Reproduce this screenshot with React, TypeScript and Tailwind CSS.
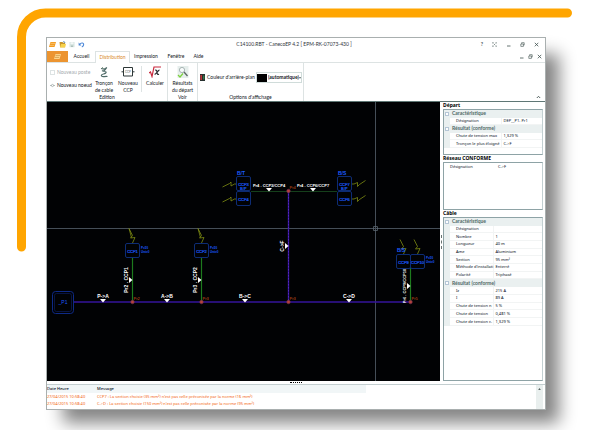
import React from "react";

type Row = { label: string; value?: string; header?: boolean };

const DEPART: Row[] = [
  { label: "Caractéristique", header: true },
  { label: "Désignation", value: "DEP__P1. Pr1" },
  { label: "Résultat (conforme)", header: true },
  { label: "Chute de tension max", value: "1,329 %" },
  { label: "Tronçon le plus éloigné", value: "C->F" },
];

const CABLE: Row[] = [
  { label: "Caractéristique", header: true },
  { label: "Désignation", value: "" },
  { label: "Nombre", value: "1" },
  { label: "Longueur", value: "40 m" },
  { label: "Ame", value: "Aluminium" },
  { label: "Section", value: "95 mm²" },
  { label: "Méthode d'installati", value: "Enterré" },
  { label: "Polarité", value: "Triphasé" },
  { label: "Résultat (conforme)", header: true },
  { label: "Iz", value: "215 A" },
  { label: "I", value: "89 A" },
  { label: "Chute de tension n", value: "5 %" },
  { label: "Chute de tension", value: "0,481 %" },
  { label: "Chute de tension c.", value: "1,329 %" },
];

const MESSAGES = [
  {
    date: "27/04/2015 10:58:40",
    text: "CCP7 : La section choisie (35 mm²) n'est pas celle préconisée par la norme (16 mm²)",
  },
  {
    date: "27/04/2015 10:58:40",
    text: "C->D : La section choisie (150 mm²) n'est pas celle préconisée par la norme (95 mm²)",
  },
];

const FolderIcon = ({ light = false }: { light?: boolean }) => (
  <svg viewBox="0 0 7 7" className="w-[7px] h-[7px]">
    <path d="M1.500 1H7L5.500 6H0z" fill={light ? "#ffd58a" : "#f39a1e"} />
    <path d="M1.500 2.400h4.500M.8 4.400h4.400" stroke={light ? "#b98532" : "#fbd79b"} strokeWidth=".6" />
  </svg>
);

const QuickAccess = () => (
  <div className="flex items-center gap-[3px] flex-1">
    <button aria-label="Caneco">
      <FolderIcon />
    </button>
    <button aria-label="Ouvrir">
      <svg viewBox="0 0 7 7" className="w-[7px] h-[7px]">
        <path d="M.5 1h3l.6.8h2v4.400h-5z" fill="#c9952b" />
        <path d="M2 3h5l-1 3.400h-5z" fill="#f7d24b" />
        <path d="M4 .6l2 .6-.6 1" stroke="#3d78a8" strokeWidth=".7" fill="none" />
      </svg>
    </button>
    <button aria-label="Enregistrer">
      <svg viewBox="0 0 6 7" className="w-1.5 h-[7px]">
        <path d="M.5 1h5v5.200h-5z" fill="#d5e3df" />
        <path d="M1.500 1.200h3v2h-3z" fill="#f4f8f7" />
        <path d="M2 4.500h2v1.600h-2z" fill="#aebfba" />
      </svg>
    </button>
    <button aria-label="Annuler">
      <svg viewBox="0 0 7 7" className="w-[7px] h-[7px]" fill="none">
        <path d="M1.500 3.500C3 1.200 6 1.600 5.600 3.800c-.2 1.300-1 1.900-1.800 2.200" stroke="#4a86d8" strokeWidth="1.100" />
        <path d="M.6 1.600v3h2.800z" fill="#4a86d8" />
      </svg>
    </button>
  </div>
);

const MinIcon = () => (
  <svg viewBox="0 0 5 5" className="size-[5px]">
    <path d="M1 4h3.500" stroke="#40504e" strokeWidth=".8" />
  </svg>
);

const RestoreIcon = () => (
  <svg viewBox="0 0 5 5" className="size-[5px]" fill="none" stroke="#40504e" strokeWidth=".6">
    <path d="M.8 2h2.600v2.400H.8zM1.600 1.800V.7h2.600v2.400h-.6" />
  </svg>
);

const CloseIcon = () => (
  <svg viewBox="0 0 5 5" className="size-[5px]">
    <path d="M.8.8l3.500 3.500M4.300.8L.8 4.300" stroke="#40504e" strokeWidth=".8" />
  </svg>
);

const TitleBar = () => (
  <div className="flex items-center h-[13px] px-0.5">
    <QuickAccess />
    <h1 className="text-[5px] leading-none text-[#2f353c] whitespace-nowrap">
      C14100.RBT - CanecoEP 4.2 [ EPM-RK-07073-430 ]
    </h1>
    <div className="flex flex-1 items-center justify-end gap-[9px] pr-1">
      <button aria-label="Aide" className="text-[5px] leading-none font-bold text-[#40504e]">
        ?
      </button>
      <button aria-label="Plein écran">
        <svg viewBox="0 0 5 5" className="size-[5px]" fill="none" stroke="#6d7c7a" strokeWidth=".6">
          <path d="M.5 1.500V.5h1.200M3.500.5h1v1M4.500 3.500v1h-1M1.700 4.500H.5v-1M1.500 1.500l2 2M3.500 1.500l-2 2" />
        </svg>
      </button>
      <button aria-label="Réduire">
        <MinIcon />
      </button>
      <button aria-label="Restaurer">
        <RestoreIcon />
      </button>
      <button aria-label="Fermer">
        <CloseIcon />
      </button>
    </div>
  </div>
);

const TabBar = () => (
  <nav className="flex items-stretch h-3 border-b border-[#dde3e3] text-[5px] leading-none text-[#11161c]">
    <button aria-label="Fichier" className="w-[21px] h-[11px] bg-[#ec9430] flex items-center justify-center">
      <FolderIcon light />
    </button>
    <button className="w-[27px]">Accueil</button>
    <button className="w-[35px] h-3 border border-b-0 border-[#dde3e3] bg-white text-[#d98a2c]">
      Distribution
    </button>
    <button className="w-8">Impression</button>
    <button className="w-7">Fenêtre</button>
    <button className="w-[17px]">Aide</button>
    <div className="flex flex-1 items-center justify-end gap-1 pr-[3px]">
      <button aria-label="Réduire le document">
        <MinIcon />
      </button>
      <button aria-label="Restaurer le document">
        <RestoreIcon />
      </button>
      <button aria-label="Fermer le document">
        <CloseIcon />
      </button>
    </div>
  </nav>
);

const BigButton = ({ lines, children }: { lines: string[]; children: React.ReactNode }) => (
  <button className="flex flex-col items-center gap-0.5 w-6 text-center leading-[7px] whitespace-nowrap">
    {children}
    <span>
      {lines.map((line) => (
        <span key={line} className="block">
          {line}
        </span>
      ))}
    </span>
  </button>
);

const Ribbon = () => (
  <div className="flex items-stretch h-[39px] border-b border-[#5f7775] text-[5px] leading-none text-[#11161c]">
    {/* Edition */}
    <section className="flex flex-col justify-between w-[121px] border-r border-[#dde3e3] pt-[3px] pb-px">
      <div className="flex">
        <div className="flex flex-col items-start gap-2 w-[45px] pl-[3px] pt-1 whitespace-nowrap">
          <button className="flex items-center gap-0.5 text-[#a3a9ad]">
            <span className="w-[5px] h-[5px] border border-[#dde3e3]" />
            Nouveau poste
          </button>
          <button className="flex items-center gap-0.5">
            <svg viewBox="0 0 5 5" className="size-[5px]" fill="none" stroke="#8b9795" strokeWidth=".6">
              <path d="M0 2.500h1.500M3.500 2.500H5" />
              <circle cx="2.500" cy="2.500" r="1.100" />
            </svg>
            Nouveau noeud
          </button>
        </div>
        <BigButton lines={["Tronçon", "de cable"]}>
          <svg viewBox="0 0 10 12" className="w-2.5 h-3" fill="none">
            <path d="M2 2.500l3 .7 3-1.700M7.500 2L5.500 4.500l-2.500.3 4 1.200c.6 1-1 1.700-2.500 2s-2.800 1.200-1.800 2.200 3 0 5.800.3" stroke="#4f6b68" strokeWidth="1.200" />
            <path d="M3 1l1.500 1.500" stroke="#6e8b72" strokeWidth=".8" />
          </svg>
        </BigButton>
        <BigButton lines={["Nouveau", "CCP"]}>
          <svg viewBox="0 0 14 12" className="w-3.5 h-3">
            <path d="M2.500 1.500h9v8.500h-9zM0.500 5.800h2M11.500 5.800h2" fill="none" stroke="#2e3838" strokeWidth="1" />
            <text x="7" y="7" textAnchor="middle" fontSize="3" fill="#5c6a6a">
              CCP
            </text>
          </svg>
        </BigButton>
        <div className="ml-px mr-px border-l border-[#dde3e3] h-[26px]" />
        <BigButton lines={["Calculer"]}>
          <svg viewBox="0 0 12 12" className="w-3 h-3" fill="none">
            <path d="M0 7l1.500-1L3 10.500 5 1h7" stroke="#c8283c" strokeWidth="1.200" />
            <path d="M6 4.200c1.500-.6 1.800.2 2 2s.6 2.600 2 2M10.500 4.200C9 4 7.500 8 5.600 8.300" stroke="#2c2f33" strokeWidth="1.200" />
          </svg>
        </BigButton>
      </div>
      <h2 className="text-center">Edition</h2>
    </section>
    {/* Voir */}
    <section className="flex flex-col justify-between items-center w-[30px] border-r border-[#dde3e3] pt-[3px] pb-px">
      <BigButton lines={["Résultats", "du départ"]}>
        <svg viewBox="0 0 12 12" className="w-3 h-3">
          <path d="M.5 0h11v12H.5z" fill="#e6eeec" />
          <circle cx="5" cy="4" r="2.600" fill="#f8fbfb" stroke="#96a5a3" strokeWidth=".8" />
          <path d="M7 6l3.500 4" stroke="#5d6866" strokeWidth="1.400" />
          <path d="M1 9l2 2 3-3.500" stroke="#7bd13c" strokeWidth="1.200" fill="none" />
        </svg>
      </BigButton>
      <h2>Voir</h2>
    </section>
    {/* Options d'affichage */}
    <section className="flex flex-col justify-between w-[106px] border-r border-[#dde3e3] pt-[9px] pb-px">
      <div className="flex items-center pl-0.5 whitespace-nowrap">
        <svg viewBox="0 0 5 7" className="w-[5px] h-[7px] shrink-0">
          <path d="M0 0h5v7H0z" fill="#27302f" />
          <path d="M.4 1h1.500v5H.4z" fill="#c9353a" />
          <path d="M3.300 1.500h1v4h-1z" fill="#3b9a58" />
        </svg>
        <label htmlFor="fond" className="w-[51px] shrink-0 pl-0.5">
          Couleur d'arrière-plan
        </label>
        <div className="flex items-center w-[46px] h-[11px] shrink-0 border border-[#d0dcda]">
          <span className="w-2.5 h-2 shrink-0 bg-black" />
          <select id="fond" className="flex-1 min-w-0 appearance-none bg-transparent pl-px text-[5px] leading-none font-bold">
            <option>(automatique)</option>
          </select>
          <svg viewBox="0 0 2 2" className="size-0.5 shrink-0">
            <path d="M0 0h2L1 2z" fill="#5c6a6a" />
          </svg>
        </div>
      </div>
      <h2 className="text-center">Options d'affichage</h2>
    </section>
    <div className="flex flex-1 items-end justify-end pr-1 pb-0.5">
      <button aria-label="Réduire le ruban">
        <svg viewBox="0 0 5 4" className="w-[5px] h-1" fill="none" stroke="#40504e" strokeWidth=".9">
          <path d="M.8 3l1.700-1.700L4.200 3" />
        </svg>
      </button>
    </div>
  </div>
);

const NODES = [
  { x: 132, y: 302, name: "Pr2" },
  { x: 201, y: 302, name: "Pr3" },
  { x: 288, y: 302, name: "Pr3" },
  { x: 288, y: 191, name: "Pr4" },
  { x: 410, y: 302, name: "Pr5" },
];

const SEGMENTS = [
  { x: 103, y: 302, name: "P->A" },
  { x: 167, y: 302, name: "A->B" },
  { x: 245, y: 302, name: "B->C" },
  { x: 349, y: 302, name: "C->D" },
  { x: 269, y: 191, name: "Pr4 . CCP3/CCP4" },
  { x: 313, y: 191, name: "Pr4 . CCP6/CCP7" },
];

const RISERS = [
  { x: 132, y: 280, size: 5, name: "Pr2 . CCP1" },
  { x: 201, y: 280, size: 5, name: "Pr3 . CCP2" },
  { x: 288, y: 246, size: 5, name: "C->F" },
  { x: 410, y: 286, size: 4, name: "Pr6 . CCP9/CCP10" },
];

const BOXES = [
  { x: 125, y: 243, name: "CCP1" },
  { x: 194, y: 243, name: "CCP2" },
  { x: 236, y: 176, name: "CCP3" },
  { x: 236, y: 191, name: "CCP4" },
  { x: 337, y: 176, name: "CCP7" },
  { x: 337, y: 191, name: "CCP6" },
  { x: 396, y: 254, name: "CCP9" },
  { x: 410, y: 254, name: "CCP10" },
];

const RATINGS = [
  { x: 141, y: 249 },
  { x: 210, y: 249 },
  { x: 426, y: 259 },
];

const Diagram = () => (
  <svg viewBox="47 102 393 279" className="block flex-1 min-w-0 bg-[#010204] self-start" fontFamily="Liberation Sans, sans-serif">
    {/* cursor */}
    <path d="M47 228.500h393M375.500 102v279" stroke="#454e58" strokeWidth="1" />
    <path d="M373.500 226.500h4v4h-4z" fill="none" stroke="#5b6670" strokeWidth=".8" />

    {/* cables */}
    <path d="M74 302h336M288.500 191v111" stroke="#35149a" strokeWidth="1.400" />
    <path d="M288.500 191v111" stroke="#6b35d8" strokeWidth=".6" strokeDasharray="1.500 1.500" />
    <path d="M132.500 258v44M201.500 258v44M410.500 268v34" stroke="#1d7a1d" strokeWidth="1.200" />
    <path d="M251 191.500h86" stroke="#153f1b" strokeWidth="1" />

    {/* lightning marks */}
    <g fill="none" stroke="#7d8c12" strokeWidth=".8">
      <path d="M129 228.500l3.500 7-2 2.500 4.500-.5-2.500 5.500M129 228.500l2.500 9" />
      <path d="M198 228.500l3.500 7-2 2.500 4.500-.5-2.500 5.500M198 228.500l2.500 9" />
      <path d="M400 239.500l3.500 7-2 2.500 4.500-.5-2.500 5.500M414 239.500l3.500 7-2 2.500 4.500-.5-2.500 5.500" />
      <path d="M222.500 187l7-3.500 1.500-1.500v4l3.500-2h2M222.500 202l7-3.500 1.500-1.500v4l3.500-2h2" />
      <path d="M352 184h2l3.500-1.500v4l2-2 6-4M352 199h2l3.500-1.500v4l2-2 6-4" />
    </g>

    {/* source */}
    <rect x="52.500" y="291.500" width="21" height="22" rx="3" fill="none" stroke="#0e2a86" />
    <rect x="54.500" y="293.500" width="17" height="18" rx="2" fill="none" stroke="#0b1d5c" strokeWidth=".7" />
    <text x="63" y="304" textAnchor="middle" fontSize="5" fill="#1c5cff">
      _P1
    </text>

    {BOXES.map((box) => (
      <g key={box.name}>
        <rect x={box.x + 0.5} y={box.y + 0.5} width="14" height="14" rx="1.500" fill="none" stroke="#0d2c74" />
        <text x={box.x + 7.5} y={box.y + 9.5} textAnchor="middle" fontSize="4" fill="#1c5cff" stroke="#1c5cff" strokeWidth=".2">
          {box.name}
        </text>
      </g>
    ))}
    <g fill="#1c5cff" fontSize="5" fontWeight="bold">
      <text x="237" y="175">B/T</text>
      <text x="338" y="175">B/S</text>
      <text x="397" y="252">B/S</text>
    </g>
    <g fill="#1c5cff" fontSize="4" fontWeight="bold">
      <text x="240" y="190">B/P</text>
      <text x="341" y="190">B/P</text>
    </g>
    <g fill="#1c5cff" fontSize="3" fontWeight="bold">
      {RATINGS.map((r) => (
        <g key={r.x}>
          <text x={r.x} y={r.y}>P=50</text>
          <text x={r.x} y={r.y + 4}>Unt=0</text>
        </g>
      ))}
    </g>

    {SEGMENTS.map((s) => (
      <g key={s.name} fill="#fff">
        <path d={`M${s.x - 3} ${s.y - 3}h6l-3 3.500z`} />
        <text x={s.x} y={s.y - 4} textAnchor="middle" fontSize={s.y === 191 ? 4 : 5} fontWeight="bold">
          {s.name}
        </text>
      </g>
    ))}
    {RISERS.map((r) => (
      <g key={r.name} fill="#fff">
        <path d={`M${r.x - 3} ${r.y - 3}v6l3.500-3z`} />
        <text transform={`translate(${r.x - 4} ${r.y}) rotate(-90)`} textAnchor="middle" fontSize={r.size} fontWeight="bold">
          {r.name}
        </text>
      </g>
    ))}
    {NODES.map((n) => (
      <g key={`${n.x}-${n.y}`}>
        <circle cx={n.x + 0.5} cy={n.y} r="1.800" fill="#b5423c" stroke="#6d2a4c" strokeWidth=".6" />
        <text x={n.x + 1.5} y={n.y - 2} fontSize="4" fill="#d2581c">
          {n.name}
        </text>
      </g>
    ))}
  </svg>
);

type PropertyTableProps = { rows: Row[]; className: string; labelClass: string };

const PropertyTable = ({ rows, className, labelClass }: PropertyTableProps) => (
  <table className={`w-full table-fixed border-collapse ${className}`}>
    <colgroup>
      <col className="w-[6px]" />
      <col className={labelClass} />
      <col />
    </colgroup>
    <tbody>
      {rows.map((row, i) =>
        row.header ? (
          <tr key={i} className="bg-[#eaf0f0] text-[#4f6967]">
            <td className="p-0">
              <div className="ml-px size-1 border border-[#b5c6d6] bg-white" />
            </td>
            <th
              colSpan={2}
              className="p-0 pl-0.5 text-left text-[5px] leading-none font-bold font-['Lato',sans-serif]"
            >
              {row.label}
            </th>
          </tr>
        ) : (
          <tr key={i}>
            <td className="p-0 bg-[#eaf0f0]" />
            <td className="p-0 pl-1.5 whitespace-nowrap border-b border-[#f2f4f4]">{row.label}</td>
            <td className="p-0 pl-0.5 whitespace-nowrap border-b border-l border-[#f2f4f4]">{row.value}</td>
          </tr>
        )
      )}
    </tbody>
  </table>
);

const Panel = ({ title, className, children }: { title: string; className: string; children: React.ReactNode }) => (
  <section className={`flex flex-col ${className}`}>
    <h3 className="h-[7px] text-[5px] leading-[7px] font-bold text-black whitespace-nowrap">{title}</h3>
    <div className="flex-1 border border-[#8ea3a6] border-r-[#c3d0d2]">{children}</div>
  </section>
);

const SidePanel = () => (
  <aside className="flex flex-col w-[100px] text-[4px] leading-none text-[#040c20] font-['Noto_Sans','Open_Sans',sans-serif]">
    <Panel title="Départ" className="h-[53px]">
      <PropertyTable rows={DEPART} className="h-[38px]" labelClass="w-[51px]" />
    </Panel>
    <Panel title="Réseau CONFORME" className="h-[55px]">
      <dl className="flex pt-0.5 pl-1.5">
        <dt className="w-12">Désignation</dt>
        <dd>C-&gt;F</dd>
      </dl>
    </Panel>
    <Panel title="Câble" className="flex-1">
      <PropertyTable rows={CABLE} className="h-[108px]" labelClass="w-[43px]" />
    </Panel>
  </aside>
);

const MessageList = () => (
  <div className="flex h-[25px] border-t border-[#c3ced0] font-['Noto_Sans','Open_Sans',sans-serif]">
    <div className="flex-1">
      <table className="w-[319px] table-fixed text-left text-[4px] leading-none whitespace-nowrap">
        <thead>
          <tr className="h-2 bg-[#f1f6f7] text-[#040c20]">
            <th className="p-0 w-[50px] font-medium">Date Heure</th>
            <th className="p-0 font-medium">Message</th>
          </tr>
        </thead>
        <tbody className="text-[#f2610c]">
          {MESSAGES.map((m) => (
            <tr key={m.text} className="h-[7px]">
              <td className="p-0">{m.date}</td>
              <td className="p-0">{m.text}</td>
            </tr>
          ))}
        </tbody>
      </table>
    </div>
    <div className="w-[7px] mr-0.5 pt-[3px] bg-[#e9efee] flex justify-center items-start">
      <svg viewBox="0 0 4 3" className="w-[3px] h-0.5">
        <path d="M0 3l2-3 2 3z" fill="#56625f" />
      </svg>
    </div>
  </div>
);

export default function App() {
  return (
    <div className="relative min-h-screen overflow-hidden bg-white font-['Lato','Open_Sans',sans-serif] pt-[37px] pl-[46px] pr-[54px] pb-5">
      <svg viewBox="0 0 600 260" className="absolute left-0 top-0 w-full" fill="none" aria-hidden="true">
        <path d="M21.500 247V37a24 24 0 0 1 24-24h522" stroke="#ffa500" strokeWidth="9" strokeLinecap="round" />
      </svg>
      <main className="relative bg-white border border-[#a9afaf] shadow-[15px_15px_16px_-2px_#858585]">
        <TitleBar />
        <TabBar />
        <Ribbon />
        <div className="flex">
          <Diagram />
          {/* splitter between the drawing and the properties */}
          <div className="w-[3px] flex items-center justify-center" aria-hidden="true">
            <div className="h-3.5 border-l border-dashed border-[#6a7472]" />
          </div>
          <SidePanel />
          <div className="w-0.5" />
        </div>
        <div className="h-[3px] flex items-center justify-center" aria-hidden="true">
          <div className="w-3 border-t border-dotted border-black" />
        </div>
        <MessageList />
      </main>
    </div>
  );
}
